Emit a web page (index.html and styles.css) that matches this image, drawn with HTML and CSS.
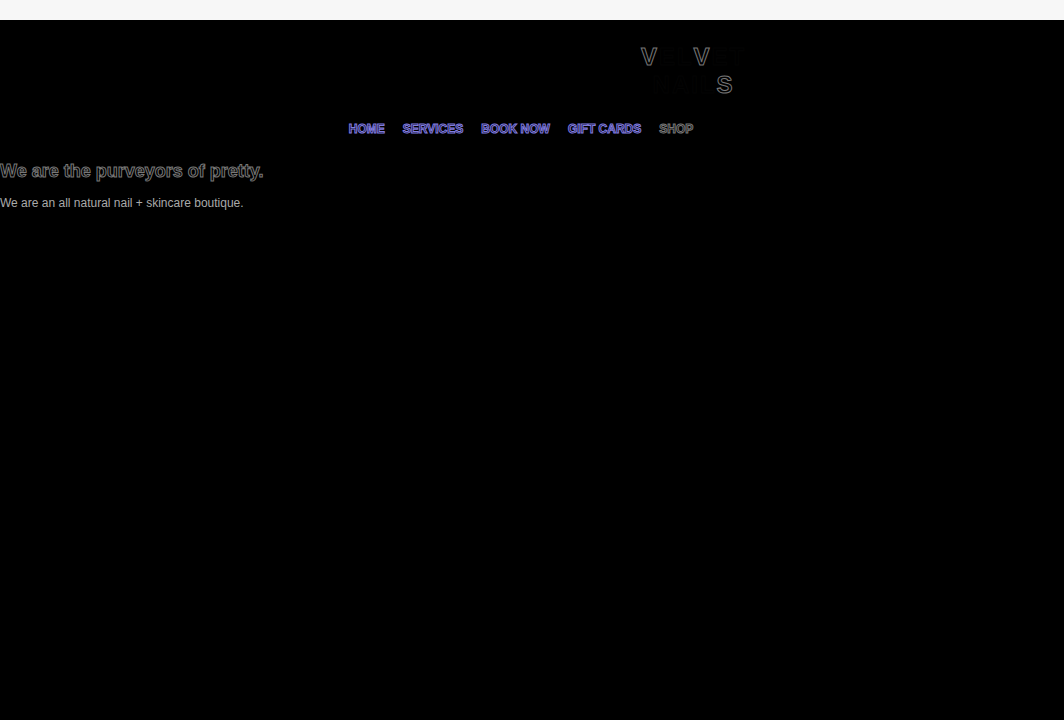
FILE: index.html
```
<!DOCTYPE html>
<html lang="en">
<head>
    <meta charset="UTF-8">
    <meta name="viewport" content="width=device-width, initial-scale=1.0">
    <title>Velvet Nails</title>
    <link rel="stylesheet" href="styles.css">
</head>
<body>
    <div class="topbar"></div>
    <header>
        <div class="logo"><b>V</b>EL<b>V</b>ET<br>NAIL<b>S</b></div>
        <nav>
            <a href="#">HOME</a>
            <a href="#">SERVICES</a>
            <a href="#">BOOK NOW</a>
            <a href="#">GIFT CARDS</a>
            <a class="shop" href="#">SHOP</a>
        </nav>
    </header>
    <main>
        <h1>We are the purveyors of pretty.</h1>
        <p>We are an all natural nail + skincare boutique.</p>
    </main>
</body>
</html>
```

FILE: styles.css
```
* {
    margin: 0;
    padding: 0;
    box-sizing: border-box;
}
body {
    min-height: 100vh;
    background-color: #000;
    color: #000;
    font-family: "Liberation Sans", Arial, sans-serif;
}
.topbar {
    height: 20px;
    background-color: #f7f7f7;
}
header {
    padding-top: 23px;
}
.logo {
    margin-left: 30%;
    padding-left: 4px;
    text-align: center;
    font-size: 24px;
    line-height: 28px;
    font-weight: bold;
    letter-spacing: 2px;
    -webkit-text-stroke: 1px #040404;
}
.logo b {
    -webkit-text-stroke: 1px #777;
}
nav {
    display: flex;
    justify-content: center;
    gap: 18px;
    margin-top: 22px;
    padding-right: 22px;
}
nav a {
    color: #000;
    font-size: 12px;
    line-height: 16px;
    font-weight: bold;
    text-decoration: none;
    -webkit-text-stroke: 1px #807ce0;
}
nav .shop {
    -webkit-text-stroke: 1px #777;
}
main {
    padding-top: 23px;
}
h1 {
    font-size: 18px;
    line-height: 22px;
    -webkit-text-stroke: 1px #777;
}
p {
    margin-top: 13px;
    font-size: 12px;
    line-height: 16px;
    color: #aaa;
}
```
